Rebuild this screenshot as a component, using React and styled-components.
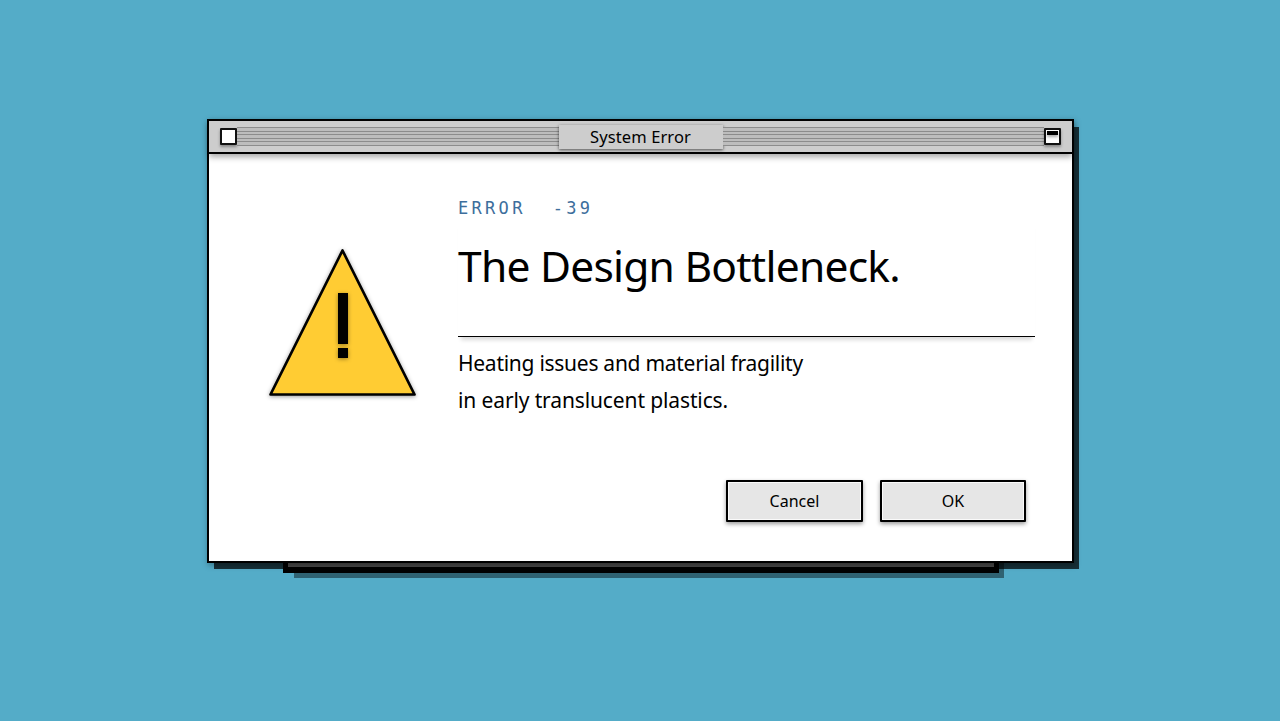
import styled, { createGlobalStyle } from "styled-components";

const GlobalStyle = createGlobalStyle`
  * {
    box-sizing: border-box;
  }
  body {
    margin: 0;
    font-family: "Noto Sans", sans-serif;
    color: #000;
  }
`;
const Desktop = styled.main`
  height: 721px;
  padding: 119px 0 0 207px;
  background-color: #54acc8;
  overflow: hidden;
`;
const WindowStack = styled.div`
  position: relative;
  width: 867px;
  height: 444px;
`;
const BackWindow = styled.div`
  position: absolute;
  left: 76px;
  bottom: -10px;
  width: 716px;
  height: 100px;
  background-color: #fff;
  border: 5px solid #000;
  border-bottom-width: 6px;
  box-shadow: 8px 8px 0 -3px rgba(0, 0, 0, 0.43);
`;
const WindowContainer = styled.section`
  position: relative;
  height: 100%;
  display: flex;
  flex-direction: column;
  background-color: #fff;
  border: 2px solid #000;
  box-shadow:
    6px 7px 0 -1px rgba(0, 0, 0, 0.72),
    1px 2px 6px rgba(0, 0, 0, 0.35);
`;
const TitleBar = styled.header`
  flex: none;
  height: 33px;
  display: flex;
  align-items: center;
  padding: 0 11px;
  background-color: #cdcdcd;
  border-bottom: 2px solid #000;
  box-shadow: 0 3px 6px rgba(0, 0, 0, 0.35);
`;
const Stripes = styled.div`
  flex: ${(props) => props.$grow} 0 0;
  height: 19px;
  background: repeating-linear-gradient(
    #8c8c8c 0 1px,
    #bdbdbd 1px 3.5px
  );
`;
const Title = styled.h1`
  width: 164px;
  height: 24px;
  margin: 1px 0 0;
  background-color: #cdcdcd;
  box-shadow: 0 1px 3px rgba(0, 0, 0, 0.6);
  font-size: 16.5px;
  font-weight: 400;
  letter-spacing: 0.1px;
  line-height: 23px;
  text-align: center;
`;
const BarButton = styled.button`
  width: 17px;
  height: 17px;
  padding: 1px 0 0;
  display: flex;
  justify-content: center;
  background-color: #fff;
  border: 2px solid #111;
  border-radius: 1px;
  box-shadow: 0 2px 3px rgba(0, 0, 0, 0.35);
`;
const CollapseMark = styled.span`
  flex: none;
  width: 11px;
  height: 4px;
  background-color: #000;
  box-shadow: 0 2px 3px rgba(0, 0, 0, 0.35);
`;
const Body = styled.div`
  flex: 1;
  display: grid;
  grid-template-columns: 249px 577px;
`;
const IconContainer = styled.div`
  padding: 92px 0 0 58px;
  svg {
    display: block;
    filter: drop-shadow(0 1px 2px rgba(0, 0, 0, 0.4));
  }
`;
const Mark = styled.path`
  filter: drop-shadow(0 1px 2px rgba(0, 0, 0, 0.4));
`;
const Content = styled.div`
  padding-top: 42px;
`;
const ErrorCode = styled.p`
  margin: 0;
  color: #3d6e9c;
  font-family: "DejaVu Sans Mono", monospace;
  font-size: 17px;
  letter-spacing: 3.3px;
  line-height: 24px;
  white-space: pre;
`;
const Headline = styled.h2`
  height: 117px;
  margin: 0;
  padding-top: 16px;
  border-bottom: 1px solid #000;
  box-shadow: 0 6px 4px -3px rgba(0, 0, 0, 0.15);
  font-size: 42.5px;
  font-weight: 400;
  letter-spacing: -0.75px;
  line-height: 60px;
  white-space: nowrap;
`;
const Message = styled.p`
  margin: 8px 0 0;
  font-size: 21px;
  line-height: 37px;
  white-space: nowrap;
`;
const Line = styled.span`
  display: block;
  letter-spacing: ${(props) => props.$spacing}px;
`;
const Actions = styled.div`
  display: flex;
  justify-content: flex-end;
  gap: 17px;
  padding: 61px 9px 0 0;
`;
const ActionButton = styled.button`
  width: ${(props) => props.$width}px;
  height: 42px;
  padding: 0;
  background-color: #e6e6e6;
  border: 2px solid #000;
  border-radius: 1px;
  box-shadow:
    inset 0 0 0 1px #fafafa,
    0 2px 4px rgba(0, 0, 0, 0.4);
  color: #000;
  font-family: inherit;
  font-size: 16px;
`;

function WarningIcon() {
  return (
    <svg width="152" height="152" viewBox="0 0 152 152">
      <path
        d="M75.5 4.5 L147.5 148.5 H3.5 Z"
        fill="#ffcc33"
        stroke="#000"
        strokeWidth="2.7"
        strokeLinejoin="round"
      />
      <Mark d="M71 47h10v51H71zM71 102h10v10H71z" fill="#000" />
    </svg>
  );
}

function App() {
  return (
    <>
      <GlobalStyle />
      <Desktop>
        <WindowStack>
          <BackWindow />
          <WindowContainer>
            <TitleBar>
              <BarButton aria-label="Close" />
              <Stripes $grow={322} />
              <Title>System Error</Title>
              <Stripes $grow={322} />
              <BarButton aria-label="Collapse">
                <CollapseMark />
              </BarButton>
            </TitleBar>
            <Body>
              <IconContainer>
                <WarningIcon />
              </IconContainer>
              <Content>
                <ErrorCode>{"ERROR  -39"}</ErrorCode>
                <Headline>The Design Bottleneck.</Headline>
                <Message>
                  <Line $spacing={-0.27}>
                    Heating issues and material fragility
                  </Line>
                  <Line $spacing={-0.12}>in early translucent plastics.</Line>
                </Message>
                <Actions>
                  <ActionButton $width={137}>Cancel</ActionButton>
                  <ActionButton $width={146}>OK</ActionButton>
                </Actions>
              </Content>
            </Body>
          </WindowContainer>
        </WindowStack>
      </Desktop>
    </>
  );
}
export default App;
